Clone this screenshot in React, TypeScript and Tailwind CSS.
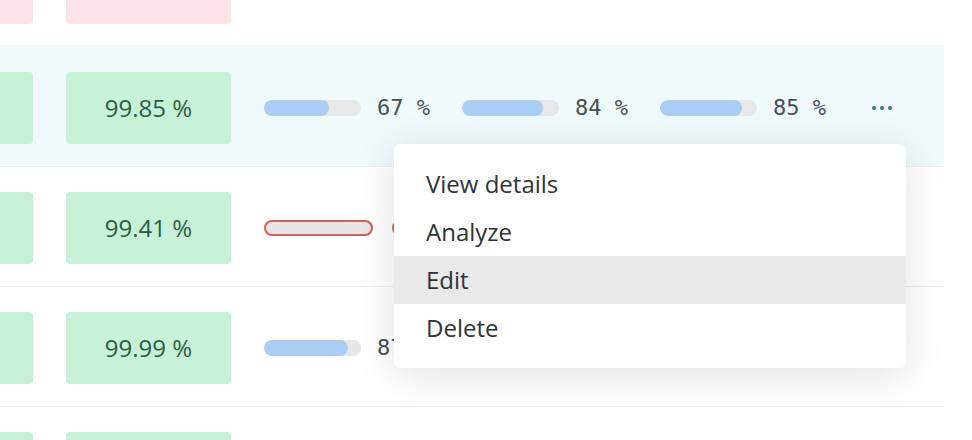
import React from "react";

type Bar = { pct: number };

function Progress({ pct }: Bar) {
  return (
    <div className="flex items-center w-[166px]">
      <div className="relative h-[16px] w-[97px] rounded-full bg-[#e6e7e8] overflow-hidden">
        <div className="absolute left-0 top-0 h-full rounded-full bg-[#a9cdf3]" style={{ width: `${pct}%` }} />
      </div>
      <span className="ml-[16px] font-['DejaVu_Sans_Mono',monospace] text-[22px] leading-none text-[#4a4f54] whitespace-pre">
        {pct} %
      </span>
    </div>
  );
}

function Dots() {
  return (
    <div className="ml-[46px] flex items-center gap-[4px]">
      <span className="block h-[4px] w-[4px] rounded-full bg-[#3a7690]" />
      <span className="block h-[4px] w-[4px] rounded-full bg-[#3a7690]" />
      <span className="block h-[4px] w-[4px] rounded-full bg-[#3a7690]" />
    </div>
  );
}

function GreenBox({ text }: { text?: string }) {
  return (
    <div className="flex h-[72px] w-[165px] shrink-0 items-center justify-center rounded-[4px] bg-[#c7f2d8] text-[24px] text-[#2b5d43]">
      {text}
    </div>
  );
}

function RedBox() {
  return <div className="h-[72px] w-[165px] shrink-0 rounded-[4px] bg-[#fde4e6]" />;
}

export default function App() {
  return (
    <div className="relative h-[440px] w-[972px] overflow-hidden bg-white font-['Open_Sans',sans-serif]">
      <div className="-mt-[74px] w-[944px]">
        {/* Row 1 */}
        <div className="-ml-[132px] flex h-[120px] items-center gap-[33px] border-t border-[#efefef] pt-[3px]">
          <RedBox />
          <RedBox />
        </div>
        {/* Row 2 (hovered) */}
        <div className="flex h-[120px] items-center border-t border-[#eef3f4] bg-[#f0f9fb] pt-[3px]">
          <div className="-ml-[132px] flex items-center gap-[33px]">
            <GreenBox />
            <GreenBox text="99.85 %" />
          </div>
          <div className="ml-[33px] flex items-center gap-[32px]">
            <Progress pct={67} />
            <Progress pct={84} />
            <Progress pct={85} />
          </div>
          <Dots />
        </div>
        {/* Row 3 */}
        <div className="flex h-[120px] items-center border-t border-[#efefef] pt-[3px]">
          <div className="-ml-[132px] flex items-center gap-[33px]">
            <GreenBox />
            <GreenBox text="99.41 %" />
          </div>
          <div className="ml-[33px] flex items-center">
            <div className="h-[16px] w-[109px] rounded-full border-2 border-[#d2625a] bg-[#e6e6e6]" />
            <div className="ml-[19px] h-[16px] w-[109px] rounded-full border-2 border-[#d2625a] bg-[#e6e6e6]" />
          </div>
        </div>
        {/* Row 4 */}
        <div className="flex h-[120px] items-center border-t border-[#efefef] pt-[3px]">
          <div className="-ml-[132px] flex items-center gap-[33px]">
            <GreenBox />
            <GreenBox text="99.99 %" />
          </div>
          <div className="ml-[33px] flex items-center gap-[32px]">
            <Progress pct={87} />
            <Progress pct={90} />
            <Progress pct={88} />
          </div>
          <Dots />
        </div>
        {/* Row 5 */}
        <div className="flex h-[120px] items-center border-t border-[#efefef] pt-[3px]">
          <div className="-ml-[132px] flex items-center gap-[33px]">
            <GreenBox />
            <GreenBox />
          </div>
        </div>
      </div>

      {/* Dropdown menu */}
      <div className="absolute left-[394px] top-[144px] w-[512px] rounded-[6px] bg-white py-[16px] shadow-[0_6px_40px_rgba(0,0,0,0.12)]">
        {["View details", "Analyze", "Edit", "Delete"].map((label) => (
          <div
            key={label}
            className={`flex h-[48px] items-center pl-[32px] text-[24px] text-[#2e3337] ${label === "Edit" ? "bg-[#e8e9e9]" : ""}`}
          >
            {label}
          </div>
        ))}
      </div>
    </div>
  );
}
